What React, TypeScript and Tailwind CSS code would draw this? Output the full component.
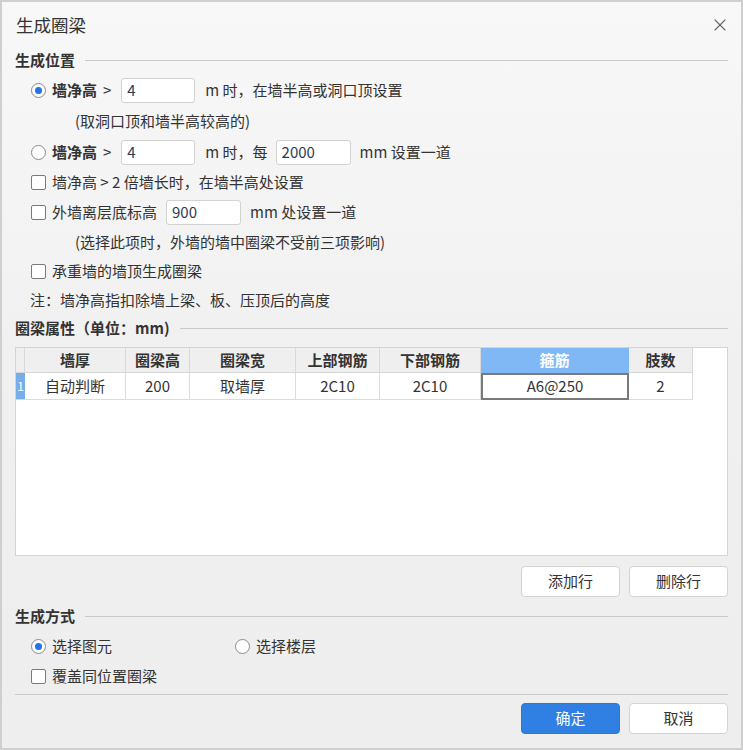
import React from 'react';
import { X } from 'lucide-react';

const font = { fontFamily: '"Microsoft YaHei", "Noto Sans CJK SC", "Noto Sans", sans-serif' };

const Radio = ({ checked }: { checked?: boolean }) => (
  <span className="w-[15px] h-[15px] rounded-full border border-[#8a8a8a] bg-white flex items-center justify-center shrink-0">
    {checked && <span className="w-[7px] h-[7px] rounded-full bg-[#1f74e6]" />}
  </span>
);

const Check = () => (
  <span className="w-[15px] h-[15px] rounded-[2px] border border-[#7a7a7a] bg-white shrink-0" />
);

const Input = ({ value, w }: { value: string; w: string }) => (
  <div className={`${w} h-[25px] bg-white border border-[#d2d2d2] rounded-[3px] flex items-center pl-[5px] text-[15px] text-[#2a3a55]`}>
    {value}
  </div>
);

const Section = ({ title }: { title: string }) => (
  <div className="h-[24px] flex items-center gap-[10px]">
    <span className="text-[15px] font-bold text-[#333]">{title}</span>
    <div className="flex-1 h-px bg-[#c9c9c9]" />
  </div>
);

const Btn = ({ label, primary }: { label: string; primary?: boolean }) => (
  <button
    className={
      primary
        ? 'w-[99px] h-[31px] rounded-[4px] bg-[#2f80e2] border border-[#2a78d6] text-white text-[15px]'
        : 'w-[99px] h-[31px] rounded-[4px] bg-white border border-[#d3d3d3] text-[#333] text-[15px]'
    }
  >
    {label}
  </button>
);

const cols = [
  { h: '墙厚', v: '自动判断', w: 'w-[101px]' },
  { h: '圈梁高', v: '200', w: 'w-[64px]' },
  { h: '圈梁宽', v: '取墙厚', w: 'w-[106px]' },
  { h: '上部钢筋', v: '2C10', w: 'w-[84px]' },
  { h: '下部钢筋', v: '2C10', w: 'w-[101px]' },
  { h: '箍筋', v: 'A6@250', w: 'w-[148px]', sel: true },
  { h: '肢数', v: '2', w: 'w-[64px]' },
];

export default function App() {
  return (
    <div style={font} className="w-[743px] h-[750px] bg-gradient-to-b from-[#f8f8f8] via-[#f0f0f0] to-[#eeeeee] border-2 border-[#cfcfcf] text-[#333] text-[15px] flex flex-col">
      {/* Title bar */}
      <div className="h-[46px] flex items-center justify-between pl-[14px] pr-[11px]">
        <span className="text-[17.5px] text-[#333]">生成圈梁</span>
        <X size={20} strokeWidth={1.3} className="text-[#666]" />
      </div>

      <div className="px-[13px] flex flex-col">
        <Section title="生成位置" />

        <div className="pl-[16px] flex flex-col mt-[3px]">
          <div className="h-[30px] flex items-center">
            <Radio checked />
            <span className="ml-[6px] font-semibold">墙净高</span>
            <span className="ml-[6px]">&gt;</span>
            <div className="ml-[10px]"><Input value="4" w="w-[74px]" /></div>
            <span className="ml-[10px]">m 时，在墙半高或洞口顶设置</span>
          </div>
          <div className="h-[32px] flex items-center pl-[44px]">(取洞口顶和墙半高较高的)</div>
          <div className="h-[30px] flex items-center">
            <Radio />
            <span className="ml-[6px] font-semibold">墙净高</span>
            <span className="ml-[6px]">&gt;</span>
            <div className="ml-[10px]"><Input value="4" w="w-[74px]" /></div>
            <span className="ml-[10px]">m 时，每</span>
            <div className="ml-[8px]"><Input value="2000" w="w-[75px]" /></div>
            <span className="ml-[9px]">mm 设置一道</span>
          </div>
          <div className="h-[30px] flex items-center">
            <Check />
            <span className="ml-[6px]">墙净高 &gt; 2 倍墙长时，在墙半高处设置</span>
          </div>
          <div className="h-[31px] flex items-center">
            <Check />
            <span className="ml-[6px]">外墙离层底标高</span>
            <div className="ml-[9px]"><Input value="900" w="w-[75px]" /></div>
            <span className="ml-[9px]">mm 处设置一道</span>
          </div>
          <div className="h-[28px] flex items-center pl-[44px]">(选择此项时，外墙的墙中圈梁不受前三项影响)</div>
          <div className="h-[30px] flex items-center">
            <Check />
            <span className="ml-[6px]">承重墙的墙顶生成圈梁</span>
          </div>
        </div>
        <div className="h-[28px] flex items-center pl-[15px]">注：墙净高指扣除墙上梁、板、压顶后的高度</div>

        <div className="mt-[2px]"><Section title="圈梁属性（单位：mm)" /></div>

        {/* Table */}
        <div className="mt-[7px] h-[209px] bg-white border border-[#d4d4d4] flex flex-col">
          <div className="flex h-[25px]">
            <div className="w-[9px] bg-[#efefef] border-r border-b border-[#d8d8d8]" />
            {cols.map(c => (
              <div
                key={c.h}
                className={`${c.w} flex items-center justify-center font-bold border-r border-b ${
                  c.sel ? 'bg-[#80b8f6] text-white border-[#80b8f6]' : 'bg-[#efefef] text-[#333] border-[#d8d8d8]'
                }`}
              >
                {c.h}
              </div>
            ))}
          </div>
          <div className="flex h-[27px]">
            <div className="w-[9px] bg-[#76aee9] text-white text-[12px] flex items-center justify-center border-b border-[#d8d8d8]">1</div>
            {cols.map(c => (
              <div
                key={c.h}
                className={`${c.w} flex items-center justify-center ${
                  c.sel ? 'border-2 border-[#7a7a7a]' : 'border-r border-b border-[#dcdcdc]'
                }`}
              >
                {c.v}
              </div>
            ))}
          </div>
        </div>

        <div className="mt-[10px] flex justify-end gap-[9px]">
          <Btn label="添加行" />
          <Btn label="删除行" />
        </div>

        <div className="mt-[7px]"><Section title="生成方式" /></div>

        <div className="pl-[16px] flex flex-col mt-[3px]">
          <div className="h-[30px] flex items-center">
            <Radio checked />
            <span className="ml-[6px] w-[183px]">选择图元</span>
            <Radio />
            <span className="ml-[6px]">选择楼层</span>
          </div>
          <div className="h-[30px] flex items-center">
            <Check />
            <span className="ml-[6px]">覆盖同位置圈梁</span>
          </div>
        </div>

        <div className="mt-[3px] h-px bg-[#c9c9c9]" />

        <div className="mt-[8px] flex justify-end gap-[9px]">
          <Btn label="确定" primary />
          <Btn label="取消" />
        </div>
      </div>
    </div>
  );
}
